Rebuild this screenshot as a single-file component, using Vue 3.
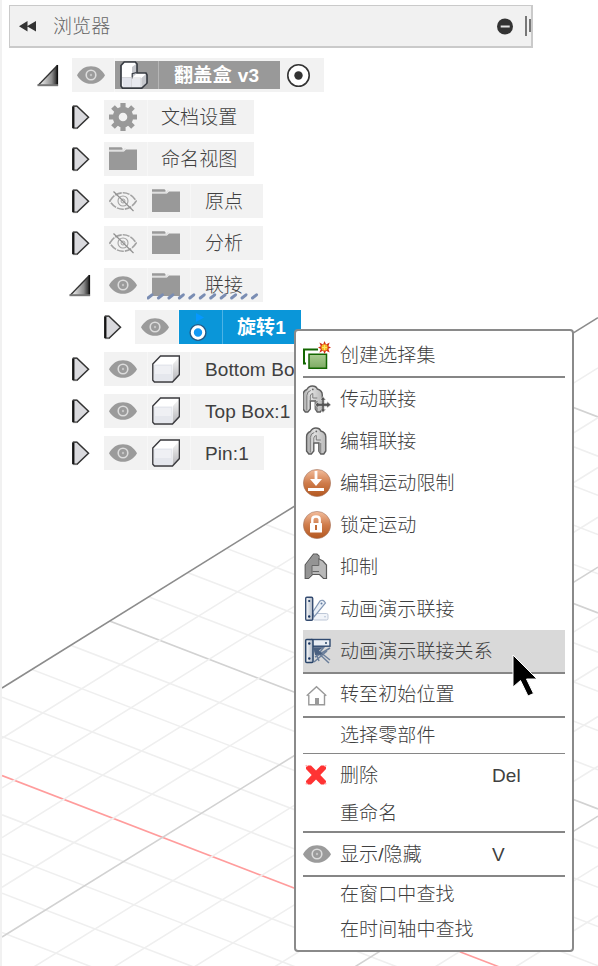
<script setup>
const rows = [
  { label: '文档设置', level: 1, icon: 'gear' },
  { label: '命名视图', level: 1, icon: 'folder' },
  { label: '原点', level: 1, eye: 'eye-off', icon: 'folder' },
  { label: '分析', level: 1, eye: 'eye-off', icon: 'folder' },
  { label: '联接', level: 1, eye: 'eye', icon: 'folder', open: true, marked: true },
  { label: '旋转1', level: 2, eye: 'eye', icon: 'joint', selected: true },
  { label: 'Bottom Box:1', level: 1, eye: 'eye', icon: 'box' },
  { label: 'Top Box:1', level: 1, eye: 'eye', icon: 'box' },
  { label: 'Pin:1', level: 1, eye: 'eye', icon: 'box' },
]

const menu = [
  { label: '创建选择集', icon: 'select-set' },
  { sep: true },
  { label: '传动联接', icon: 'drive' },
  { label: '编辑联接', icon: 'edit-joint' },
  { label: '编辑运动限制', icon: 'limits' },
  { label: '锁定运动', icon: 'lock' },
  { label: '抑制', icon: 'suppress' },
  { label: '动画演示联接', icon: 'animate' },
  { label: '动画演示联接关系', icon: 'animate-rel', active: true },
  { sep: true },
  { label: '转至初始位置', icon: 'home', raised: true },
  { sep: true },
  { label: '选择零部件', short: true },
  { sep: true, thin: true },
  { label: '删除', icon: 'delete', key: 'Del' },
  { label: '重命名', short: true },
  { sep: true },
  { label: '显示/隐藏', icon: 'eye', key: 'V' },
  { sep: true },
  { label: '在窗口中查找', short: true },
  { label: '在时间轴中查找', short: true },
]

// Ground grid: two families of parallel lines, every fifth one is major.
const rising = Array.from({ length: 13 }, (_, i) => {
  const k = i + 1
  return { y1: 688.5 + 49.7 * k, y2: 318.1 + 49.8 * k, major: k % 5 === 0 }
})
const falling = Array.from({ length: 21 }, (_, i) => {
  const k = i - 15
  const y = 775.6 + 39.2 * k
  return { y1: y, y2: y + 596 * 0.3848, major: k % 5 === 0, axis: k === 0 }
})
const dashes = Array.from({ length: 11 }, (_, i) => 3 + i * 10.45)
</script>

<template>
  <div class="page">
    <svg class="defs" width="0" height="0" aria-hidden="true">
      <defs>
        <linearGradient id="g-open" x1="0" y1="0" x2="1" y2="0">
          <stop offset="0.2" stop-color="#ddd" /><stop offset="0.7" stop-color="#8c8c8c" /><stop offset="1" stop-color="#222" />
        </linearGradient>
        <linearGradient id="g-orange" x1="0" y1="0" x2="0" y2="1">
          <stop offset="0" stop-color="#f3bd9c" /><stop offset="0.5" stop-color="#cf7c4b" /><stop offset="1" stop-color="#b3571f" />
        </linearGradient>
        <linearGradient id="g-green" x1="0" y1="0" x2="0" y2="1">
          <stop offset="0" stop-color="#aacd92" /><stop offset="1" stop-color="#7dab63" />
        </linearGradient>
        <linearGradient id="g-metal" x1="0" y1="0" x2="1" y2="0">
          <stop offset="0" stop-color="#a8a8a8" /><stop offset="0.4" stop-color="#e2e2e2" /><stop offset="1" stop-color="#b8b8b8" />
        </linearGradient>
        <linearGradient id="g-side" x1="0" y1="0" x2="0" y2="1">
          <stop offset="0" stop-color="#f8f8f8" /><stop offset="1" stop-color="#b4b4b8" />
        </linearGradient>
        <linearGradient id="g-bar" x1="0" y1="0" x2="1" y2="0">
          <stop offset="0" stop-color="#fff" /><stop offset="1" stop-color="#aab4c3" />
        </linearGradient>
      </defs>
      <symbol id="closed" viewBox="0 0 22 28">
        <path d="M4.5 3.2H8L19.5 14.3 8 25.2H4.5z" fill="#dadade" stroke="#333" stroke-width="1.5" />
        <path d="M4.2 3.4v21.6" stroke="#151515" stroke-width="2.2" />
        <path d="M4 2.8h4M4 25.6h4" stroke="#777" stroke-width="1" />
      </symbol>
      <symbol id="open" viewBox="0 0 22 28">
        <path d="M1.5 24L20.5 4.5V24z" fill="url(#g-open)" />
        <path d="M1 24.5L20.5 4.3" stroke="#333" stroke-width="1.3" />
        <path d="M20.4 4V25" stroke="#111" stroke-width="1.4" />
        <path d="M.5 24.2H21" stroke="#777" stroke-width="2" />
      </symbol>
      <symbol id="eye" viewBox="0 0 28 28">
        <path d="M0 14.2C3 8.5 8 5.2 14 5.2s11 3.3 14 9c-3 5.4-8 8.6-14 8.6s-11-3.2-14-8.6z" fill="#9b9b9b" />
        <circle cx="14" cy="14" r="4.8" fill="#9b9b9b" stroke="#dcdcdc" stroke-width="1.6" />
        <circle cx="14" cy="14" r="1.2" fill="#c4c4c4" />
      </symbol>
      <symbol id="eye-off" viewBox="0 0 28 28">
        <path d="M.8 14C4 8.7 8.5 5.8 14 5.8S24 8.7 27.2 14C24 19.3 19.5 22.2 14 22.2S4 19.3 .8 14z" fill="none" stroke="#a2a2a2" stroke-width="1.6" stroke-dasharray="7 1" />
        <circle cx="14" cy="14" r="5" fill="none" stroke="#a2a2a2" stroke-width="1.1" />
        <circle cx="14" cy="14" r="2" fill="none" stroke="#a2a2a2" />
        <path d="M4.5 4.5L24.5 24" stroke="#909090" stroke-width="1.2" />
      </symbol>
      <symbol id="folder" viewBox="0 0 28 28">
        <path d="M0 2.2H12.5L13.5 3.2V4.8H0zM0 6.6H15L17 4.5H28V25H0z" fill="#999" />
        <path d="M0 5.7H14.2L16.4 3.4" fill="none" stroke="#e0e0e0" stroke-width="1.3" />
      </symbol>
      <symbol id="gear" viewBox="0 0 28 28">
        <circle cx="14" cy="14" r="7.3" fill="none" stroke="#999" stroke-width="6" />
        <path d="M14 0v6M14 22v6M0 14h6M22 14h6M4 4l5 5M19 19l5 5M24 4l-5 5M9 19l-5 5" stroke="#999" stroke-width="5.2" />
      </symbol>
      <symbol id="box" viewBox="0 0 28 28">
        <path d="M.7 9L8.5 1H27.5V19.5L20.5 27H2.3L.7 25.3z" fill="#fff" />
        <path d="M21 9L27 2V20L20.5 26.5z" fill="url(#g-side)" />
        <path d="M1.5 9.5H20.5V26H2z" fill="#e5e7ed" /><path d="M3 11H19V19H3z" fill="#eff0f4" />
        <path d="M.8 9L8.5 1H27.4V19.5L20.5 27H2.4L.8 25.2z" fill="none" stroke="#39393d" stroke-width="1.4" />
      </symbol>
      <symbol id="assembly" viewBox="0 0 28 28">
        <path d="M1 4.5L4.2 1H15.3L17 3V12H26L27 14V22L21.7 27.2H2.5L1 25z" fill="#fff" stroke="#373b42" stroke-width="1.7" />
        <path d="M2 17H11V26H3z" fill="#e2e4ec" /><path d="M12 18H21V26H12z" fill="#e7e9ef" />
        <path d="M12 6L16 3V13L12 17zM21.5 17L26 13V22L21.5 26z" fill="#c5c7cc" />
        <path d="M12.2 17.5V12.8L16.5 11.5" fill="none" stroke="#373b42" stroke-width="1.2" />
        <path d="M2 16.5H11.5V26M12 17H21V26" fill="none" stroke="#cacbd0" stroke-width=".8" />
      </symbol>
      <symbol id="joint" viewBox="0 0 28 28">
        <path d="M12 0V9L20 4.5z" fill="#0698ff" />
        <circle cx="14" cy="19.5" r="6.6" fill="#1299f5" stroke="#245b88" stroke-width="4" />
        <circle cx="14" cy="19.5" r="5.7" fill="#1299f5" stroke="#fff" stroke-width="3" />
      </symbol>
      <symbol id="select-set" viewBox="0 0 28 28">
        <path d="M3 22.5H1V8.5H15" fill="none" stroke="#126600" stroke-width="2" />
        <path d="M6 13.2H23.5V27.2H6z" fill="url(#g-green)" stroke="#126600" stroke-width="1.5" />
        <path d="M21.5 0l1.6 3.6L26.6 1.5l-1.2 3.8 2.6 1.2-2.6 1.3 1.2 3.8-3.5-1.9-1.6 3.3-1.4-3.4-3.7 2.1 1.4-3.8L15 6.5l2.8-1.2-1.4-3.7 3.7 2z" fill="#d52f16" />
        <circle cx="21.5" cy="6.5" r="3.2" fill="#f4b927" /><path d="M21.5 4v5M19 6.5h5" stroke="#ffe661" />
      </symbol>
      <symbol id="clamp" viewBox="0 0 22 28">
        <path d="M1.2 24V10Q1.2 6 5 4.5Q7 1 10.5 1Q14.5 1 15.5 4Q20.5 5.5 20.5 10V24L18.5 27H15.5L13.5 24V16H8.5V24L6 27H3.5z" fill="url(#g-metal)" stroke="#5e5e5e" stroke-width="1.4" />
        <path d="M5 25.5V10.5Q5.5 6 9 5.5M8.5 16V11Q9 8.5 11 8.5V13H15.5" fill="none" stroke="#7c7c7c" stroke-width="1" />
        <path d="M13.5 16V24L16 26.5V16z" fill="#8e8e8e" />
        <circle cx="11" cy="4.4" r=".9" fill="#666" />
      </symbol>
      <symbol id="drive" viewBox="0 0 28 28">
        <use href="#clamp" x="-1.2" y="0" width="22" height="28" />
        <path d="M20 11.5L22.8 15H21.2V18.3H24V16.6L28 19.8 24 23V21.3H21.2V24.3H22.8L20 27.5 17.2 24.3H18.8V21.3H15.5V23L12 19.8 15.5 16.6V18.3H18.8V15H17.2z" fill="#555" stroke="#e8e8e8" stroke-width=".6" />
      </symbol>
      <symbol id="edit-joint" viewBox="0 0 28 28"><use href="#clamp" x="2.3" width="22" height="28" /></symbol>
      <symbol id="limits" viewBox="0 0 28 28">
        <circle cx="14" cy="14" r="13.6" fill="url(#g-orange)" stroke="#a57560" stroke-width=".6" />
        <path d="M11.6 2H14.4V10H19L13 17 7 10H11.6z" fill="#fff" /><path d="M5 19H21V22H5z" fill="#fff" />
      </symbol>
      <symbol id="lock" viewBox="0 0 28 28">
        <circle cx="14" cy="14" r="13.6" fill="url(#g-orange)" stroke="#a57560" stroke-width=".6" />
        <path d="M9.3 13V8.5Q9.3 5.5 13 5.5T16.7 8.5V13" fill="none" stroke="#fff" stroke-width="2.4" />
        <rect x="7" y="12" width="12" height="9.5" rx=".6" fill="#fff" /><path d="M13 14v5" stroke="#c26c37" stroke-width="2" />
      </symbol>
      <symbol id="suppress" viewBox="0 0 28 28">
        <path d="M2.2 25.5V12L7 5.5L10.5 1.2H14L16 3V6L20 8L23.5 12V25.5H20.5L16.5 21.5H9.5L5.5 25.5z" fill="#b9b9b9" stroke="#5b5b5b" stroke-width="1.2" />
        <path d="M3 25V12L7.5 6L11 1.8H13.5L15.5 3.2V12H9V21L5 25z" fill="#949494" />
        <path d="M15.8 5V12.5H9V21.5M9.5 18.5H16" fill="none" stroke="#666" />
      </symbol>
      <symbol id="animate" viewBox="0 0 28 28">
        <rect x="10" y="18.5" width="15" height="6.5" rx="1.5" fill="#f1f4f9" stroke="#bdc7d7" />
        <path d="M9.8 17L17 6Q20 3.8 22.5 8L11 22z" fill="#eaf0f7" stroke="#8195b3" stroke-width="1.2" />
        <rect x="2.7" y="2.2" width="7" height="23" rx="1.2" fill="url(#g-bar)" stroke="#344b70" stroke-width="1.4" />
        <circle cx="6.2" cy="6" r="1.1" fill="#19345f" /><circle cx="6.2" cy="21.5" r="1.2" fill="#19345f" /><circle cx="18.5" cy="8.5" r="1" fill="#637ca2" /><circle cx="22" cy="21.7" r=".8" fill="#aebed1" />
      </symbol>
      <symbol id="animate-rel" viewBox="0 0 28 28">
        <path d="M11 10H21L17 15 27 23M11 12L26 26M12 14L16 24M12 20L27 11M11 25L24 14" fill="none" stroke="#6b7f9b" stroke-width="1.5" />
        <rect x="9" y="2.5" width="18" height="6.7" fill="#e8edf4" stroke="#304a70" stroke-width="1.4" />
        <path d="M10.5 10.5H20L16 13.5 20 17.5 12 18z" fill="#4a6080" />
        <rect x="2.7" y="2.5" width="7.3" height="23" rx="1" fill="url(#g-bar)" stroke="#294469" stroke-width="1.5" />
        <circle cx="6.3" cy="6.5" r="1.2" fill="#19345f" /><circle cx="6.3" cy="21.5" r="1.2" fill="#19345f" /><circle cx="23" cy="6" r="1" fill="#294469" />
      </symbol>
      <symbol id="home" viewBox="0 0 28 28">
        <path d="M3.7 14.8L13.5 5.7 23.3 14.8M5.8 14V23.8H21.5V14" fill="none" stroke="#999" stroke-width="1.4" />
        <path d="M12 17h4v6.5h-4z" fill="#999" />
      </symbol>
      <symbol id="delete" viewBox="0 0 28 28">
        <path d="M3 6L5 4.5H8L13 9.5 18 4.5H21L23 6V8L17.3 14 23 20V22L21 23.5H18L13 18.5 8 23.5H5L3 22V20L8.7 14 3 8z" fill="#f33" />
        <path d="M3 5.5L4 4.5M22 4.5l1 1M3 22l1 1M22 23l1-1" stroke="#ffaaaa" stroke-width="2" />
      </symbol>
    </svg>

    <svg class="grid" width="596" height="966" viewBox="2 0 596 966">
      <clipPath id="ground"><path d="M2 688.5L598 318.1V966H2z" /></clipPath>
      <g clip-path="url(#ground)">
        <line v-for="(l, i) in falling" :key="'f' + i" x1="2" x2="598" :y1="l.y1" :y2="l.y2" :class="{ major: l.major, axis: l.axis }" />
        <line v-for="(l, i) in rising" :key="'r' + i" x1="2" x2="598" :y1="l.y1" :y2="l.y2" :class="{ major: l.major }" />
      </g>
      <line class="edge" x1="2" y1="688" x2="598" y2="317.6" />
    </svg>

    <header class="bar">
      <svg width="17" height="12" viewBox="0 0 17 12"><path d="M0 6.3L8.5 1.1V11.5zM8 6.3L17 1.1V11.5z" fill="#333" /></svg>
      <span class="title">浏览器</span>
      <svg width="28" height="20" viewBox="0 0 28 20">
        <circle cx="8" cy="10.5" r="8" fill="#333" />
        <path d="M3.7 10.5h9" stroke="#e4e4e4" stroke-width="2" />
      </svg>
      <svg width="6" height="20" viewBox="0 0 6 20"><path d="M1 0v20M5 3v13" stroke="#777" stroke-width="2" /></svg>
    </header>

    <main class="tree">
      <div class="row root">
        <svg class="expander"><use href="#open" /></svg>
        <div class="chip">
          <span class="cell"><svg class="icon"><use href="#eye" /></svg></span>
          <span class="name">
            <span class="cell"><svg class="icon"><use href="#assembly" /></svg></span>
            <span class="label">翻盖盒 v3</span>
          </span>
          <svg class="radio" width="24" height="24" viewBox="0 0 24 24">
            <circle cx="11.5" cy="12.5" r="10.7" fill="#fff" stroke="#333" stroke-width="1.6" />
            <circle cx="11.5" cy="12.5" r="4.2" fill="#333" />
          </svg>
        </div>
      </div>
      <div v-for="row in rows" :key="row.label" class="row" :class="['level' + row.level, { selected: row.selected }]">
        <svg class="expander"><use :href="row.open ? '#open' : '#closed'" /></svg>
        <div class="chip" :class="{ withEye: row.eye }">
          <span v-if="row.eye" class="cell"><svg class="icon"><use :href="'#' + row.eye" /></svg></span>
          <span class="name">
            <span class="cell"><svg class="icon"><use :href="'#' + row.icon" /></svg></span>
            <span class="label">{{ row.label }}</span>
          </span>
          <svg v-if="row.marked" class="marks" width="114" height="9" viewBox="0 0 114 9">
            <path v-for="x in dashes" :key="x" :d="`M${x - 2} 6L${x + 2} 2.8`" />
          </svg>
        </div>
      </div>
    </main>

    <nav class="menu">
      <template v-for="(item, i) in menu" :key="i">
        <div v-if="item.sep" class="sep" :class="{ thin: item.thin }"></div>
        <div v-else class="item" :class="{ short: item.short, active: item.active, raised: item.raised }">
          <span class="slot"><svg v-if="item.icon" class="icon"><use :href="'#' + item.icon" /></svg></span>
          <span class="text">{{ item.label }}</span>
          <span class="key">{{ item.key }}</span>
        </div>
      </template>
    </nav>

    <svg class="cursor" width="28" height="46" viewBox="0 0 28 46">
      <path d="M2 2V34L9.5 27.5 17 43 22.5 40.5 15.5 26H26z" fill="#000" stroke="#fff" stroke-width="1" />
    </svg>
  </div>
</template>

<style>
body { background: #fff; }
</style>

<style scoped>
.page {
  position: relative;
  box-sizing: border-box;
  width: 598px;
  height: 966px;
  overflow: hidden;
  border-left: 2px solid #f1f1f1;
  padding: 5px 0 0 7px;
  font: 300 19px/28px "Liberation Sans", "Noto Sans CJK SC", sans-serif;
  letter-spacing: 0.1px;
  color: #404040;
}
svg { display: block; flex: none; }
.defs { position: absolute; }
.grid { position: absolute; left: 0; top: 0; }
.grid line { stroke: #efefef; stroke-width: 1.6; }
.grid line.major { stroke: #d2d2d2; }
.grid line.axis { stroke: #ff9c9c; }
.grid line.edge { stroke: #8c8c8c; }

.bar {
  position: relative;
  box-sizing: border-box;
  display: flex;
  align-items: center;
  width: 524px;
  height: 43px;
  padding-left: 9px;
  border: solid #cacaca;
  border-width: 1px 2px 2px 1px;
  background: #f1f1f1;
  color: #666;
}
.title { flex: 1; padding: 2px 0 0 17px; }

.tree { position: relative; padding-top: 6px; }
.row { display: flex; align-items: center; gap: 13px; height: 42px; }
.root { padding-left: 28px; }
.level1 { padding-left: 60px; }
.level2 { padding-left: 92px; gap: 12px; }
.expander { width: 22px; height: 28px; }
.icon { width: 28px; height: 28px; }
.chip {
  position: relative;
  box-sizing: border-box;
  display: flex;
  align-items: center;
  height: 34px;
  min-width: 150px;
  padding-right: 15px;
  background: #f2f2f2;
}
.chip.withEye { min-width: 159px; }
.cell {
  box-sizing: border-box;
  display: flex;
  align-items: center;
  width: 44px;
  height: 100%;
  padding-left: 5px;
  border-right: 1px solid #f7f7f7;
}
.name { display: flex; align-items: center; height: 100%; }
.label { padding: 1px 0 0 13px; white-space: nowrap; }
.withEye .name .cell { width: 43px; padding-left: 4px; }
.withEye .label { padding-left: 14px; }
.root .chip { width: 252px; padding: 0; }
.root .chip > .cell { width: 43px; }
.root .name { width: 165px; height: 28px; background: #999; color: #fff; font-weight: 700; }
.root .name .cell { border-color: #b5b5b5; }
.root .label { padding-left: 15px; letter-spacing: 0.35px; }
.radio { margin-left: 7px; }
.selected .chip { padding-right: 0; }
.selected .name { width: 122px; background: #0a96d9; color: #fff; font-weight: 700; }
.selected .name .cell { width: 44px; border-color: #4db3e5; }
.selected .icon { margin-left: 1px; }
.marks { position: absolute; left: 43px; top: 24px; }
.marks path { stroke: #7a8db3; stroke-width: 3; stroke-linecap: round; }

.menu {
  position: absolute;
  left: 292px;
  top: 329px;
  box-sizing: border-box;
  width: 280px;
  padding: 3px 7px;
  border: 2px solid #8a8a8a;
  border-radius: 4px;
  background: #fff;
}
.item { display: flex; align-items: center; height: 42px; }
.short { height: 35px; }
.active { background: #d9d9d9; }
.slot { width: 37px; }
.text { width: 151px; padding-top: 2px; white-space: nowrap; }
.short .text, .raised .text { padding-top: 0; }
.key { padding-top: 1px; margin-left: 1px; }
.sep { height: 2px; background: #868686; }
.sep.thin { height: 1px; }

.cursor { position: absolute; left: 509px; top: 653px; }
</style>
